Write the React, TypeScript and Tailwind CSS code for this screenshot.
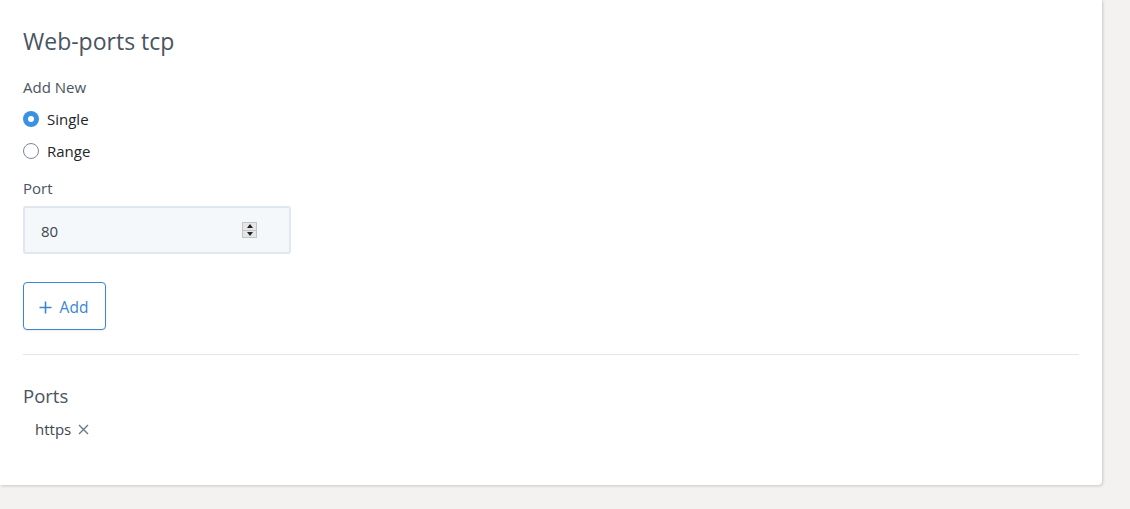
import React, { useState } from 'react';

export default function App() {
  const [mode, setMode] = useState<'single' | 'range'>('single');
  const [port, setPort] = useState('80');
  const [ports, setPorts] = useState<string[]>(['https']);

  return (
    <div
      className="min-h-screen w-[1130px] bg-[#f3f2f1]"
      style={{ fontFamily: '"Open Sans", "Noto Sans", sans-serif' }}
    >
      <div className="w-[1102px] rounded-br-[4px] bg-white pb-[45px] shadow-[1px_1px_3px_rgba(0,0,0,0.18)]">
        <div className="px-[23px] pt-[25px]">
          <h2 className="text-[23px] leading-[32px] text-[#495462]">Web-ports tcp</h2>

          <div className="mt-[19px] text-[15px] leading-[22px] text-[#495462]">Add New</div>

          <div className="mt-[10px] flex flex-col gap-[10px]">
            <label className="flex h-[22px] cursor-pointer items-center gap-[8px] text-[15px] text-[#212529]" onClick={() => setMode('single')}>
              <span
                className={
                  mode === 'single'
                    ? 'flex h-[16px] w-[16px] items-center justify-center rounded-full bg-[#3b92e0]'
                    : 'flex h-[16px] w-[16px] items-center justify-center rounded-full border border-[#7c8796] bg-white'
                }
              >
                {mode === 'single' && <span className="h-[6px] w-[6px] rounded-full bg-white" />}
              </span>
              Single
            </label>
            <label className="flex h-[22px] cursor-pointer items-center gap-[8px] text-[15px] text-[#212529]" onClick={() => setMode('range')}>
              <span
                className={
                  mode === 'range'
                    ? 'flex h-[16px] w-[16px] items-center justify-center rounded-full bg-[#3b92e0]'
                    : 'flex h-[16px] w-[16px] items-center justify-center rounded-full border border-[#7c8796] bg-white'
                }
              >
                {mode === 'range' && <span className="h-[6px] w-[6px] rounded-full bg-white" />}
              </span>
              Range
            </label>
          </div>

          <div className="mt-[15px] text-[15px] leading-[22px] text-[#495462]">Port</div>

          <div className="mt-[7px] flex h-[48px] w-[268px] items-center rounded-[3px] border-2 border-[#e1e7ee] bg-[#f5f8fb] pl-[16px] pr-[32px]">
            <input
              value={port}
              onChange={(e) => setPort(e.target.value)}
              className="mt-[2px] w-full bg-transparent text-[15px] text-[#3d4650] outline-none"
            />
            <div className="flex h-[16px] w-[15px] shrink-0 flex-col border border-[#c4c4c4] bg-[#e6e6e6]">
              <div className="flex flex-1 items-center justify-center border-b border-[#c4c4c4]">
                <span className="h-0 w-0 border-x-[3px] border-b-[4px] border-x-transparent border-b-[#222]" />
              </div>
              <div className="flex flex-1 items-center justify-center">
                <span className="h-0 w-0 border-x-[3px] border-t-[4px] border-x-transparent border-t-[#222]" />
              </div>
            </div>
          </div>

          <button
            onClick={() => port && setPorts((p) => [...p, port])}
            className="mt-[28px] flex h-[48px] w-[83px] items-center justify-center gap-[8px] rounded-[4px] border border-[#3a86d4] bg-white pt-[3px] text-[15.5px] text-[#3a86d4] shadow-[0_1px_2px_rgba(0,0,0,0.08)]"
          >
            <svg width="13" height="13" viewBox="0 0 13 13" fill="none" stroke="#3a86d4" strokeWidth="1.6" className="-ml-[2px]">
              <path d="M6.5 0.5v12M0.5 6.5h12" />
            </svg>
            Add
          </button>

          <div className="mt-[24px] h-px w-[1056px] bg-[#e2e8ef]" />

          <h3 className="mt-[28px] text-[18.5px] leading-[26px] text-[#495462]">Ports</h3>

          <div className="mt-[9px] flex items-center gap-[8px] pl-[12px]">
            {ports.map((p, i) => (
              <span key={i} className="flex items-center gap-[7px] text-[15px] leading-[22px] text-[#3d4650]">
                {p}
                <button onClick={() => setPorts((all) => all.filter((_, j) => j !== i))} className="text-[#6b7785]">
                  <svg width="11" height="11" viewBox="0 0 11 11" fill="none" stroke="currentColor" strokeWidth="1.4">
                    <path d="M1 1l9 9M10 1l-9 9" />
                  </svg>
                </button>
              </span>
            ))}
          </div>
        </div>
      </div>
    </div>
  );
}
